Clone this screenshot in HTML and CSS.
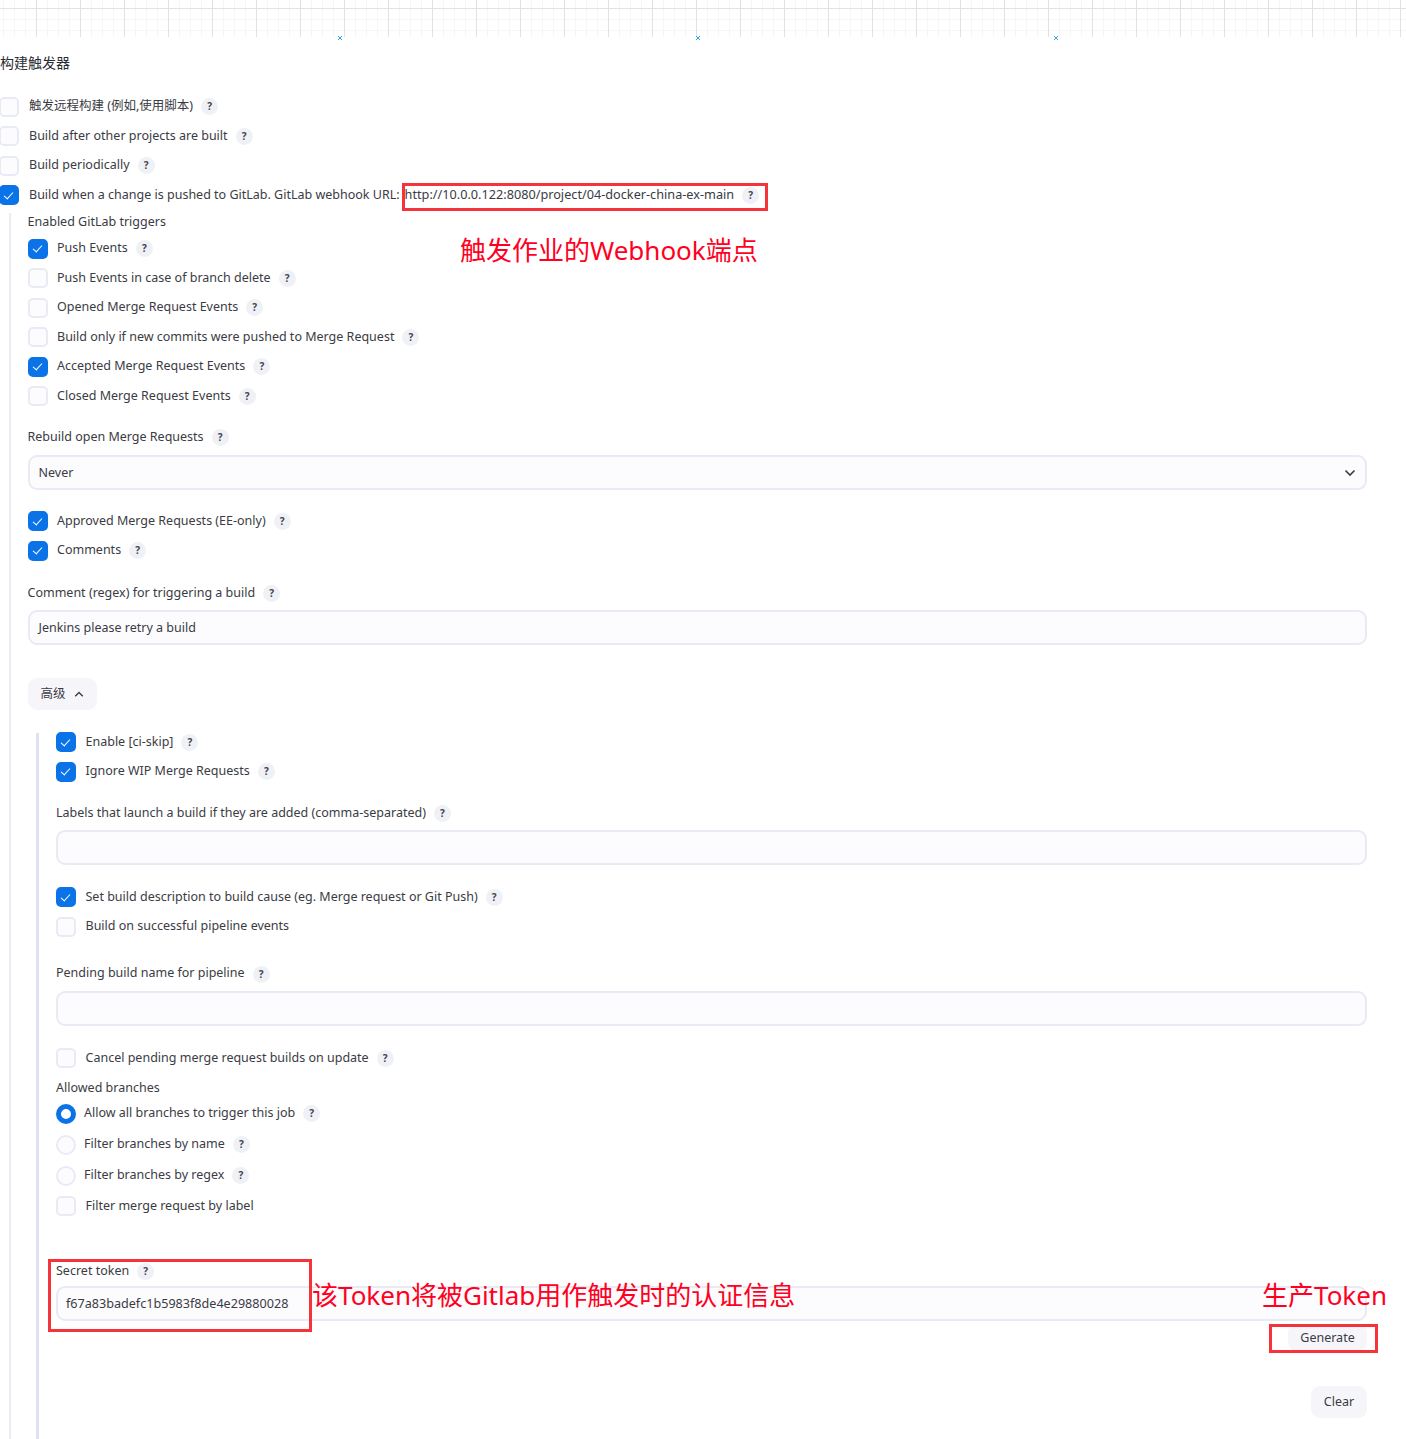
FILE: index.html
```html
<!DOCTYPE html>
<html lang="zh-CN">

<head>
    <meta charset="UTF-8">
    <title>构建触发器</title>
    <link rel="stylesheet" href="styles.css">
</head>

<body>
    <div class="grid-strip">
        <svg class="marker marker-1" viewBox="0 0 6 6"><path d="M1 1l4 4M5 1L1 5" /></svg>
        <svg class="marker marker-2" viewBox="0 0 6 6"><path d="M1 1l4 4M5 1L1 5" /></svg>
        <svg class="marker marker-3" viewBox="0 0 6 6"><path d="M1 1l4 4M5 1L1 5" /></svg>
    </div>

    <h3 class="section-title">构建触发器</h3>

    <div class="checks first-checks">
        <div class="check-row"><span class="box"></span><span class="label">触发远程构建 (例如,使用脚本)</span><span class="help">?</span></div>
        <div class="check-row"><span class="box"></span><span class="label">Build after other projects are built</span><span class="help">?</span></div>
        <div class="check-row"><span class="box"></span><span class="label">Build periodically</span><span class="help">?</span></div>
        <div class="check-row"><span class="box checked"></span><span class="label">Build when a change is pushed to GitLab. GitLab webhook URL:<span class="url">http://10.0.0.122:8080/project/04-docker-china-ex-main</span></span><span class="help">?</span></div>
    </div>

    <div class="nested nested-outer">
        <div class="field-label triggers-label">Enabled GitLab triggers</div>
        <div class="checks">
            <div class="check-row"><span class="box checked"></span><span class="label">Push Events</span><span class="help">?</span></div>
            <div class="check-row"><span class="box"></span><span class="label">Push Events in case of branch delete</span><span class="help">?</span></div>
            <div class="check-row"><span class="box"></span><span class="label">Opened Merge Request Events</span><span class="help">?</span></div>
            <div class="check-row"><span class="box"></span><span class="label">Build only if new commits were pushed to Merge Request</span><span class="help">?</span></div>
            <div class="check-row"><span class="box checked"></span><span class="label">Accepted Merge Request Events</span><span class="help">?</span></div>
            <div class="check-row"><span class="box"></span><span class="label">Closed Merge Request Events</span><span class="help">?</span></div>
        </div>

        <div class="field-label rebuild-label">Rebuild open Merge Requests<span class="help">?</span></div>
        <div class="input select">Never
            <svg class="chevron" viewBox="0 0 12 8"><path d="M1.5 1.5L6 6l4.5-4.5" /></svg>
        </div>

        <div class="checks approved-checks">
            <div class="check-row"><span class="box checked"></span><span class="label">Approved Merge Requests (EE-only)</span><span class="help">?</span></div>
            <div class="check-row"><span class="box checked"></span><span class="label">Comments</span><span class="help">?</span></div>
        </div>

        <div class="field-label comment-label">Comment (regex) for triggering a build<span class="help">?</span></div>
        <div class="input">Jenkins please retry a build</div>

        <button class="btn btn-advanced">高级
            <svg class="chevron-up" viewBox="0 0 12 8"><path d="M1.5 6L6 1.5 10.5 6" /></svg>
        </button>

        <div class="nested nested-inner">
            <div class="checks advanced-checks">
                <div class="check-row"><span class="box checked"></span><span class="label">Enable [ci-skip]</span><span class="help">?</span></div>
                <div class="check-row"><span class="box checked"></span><span class="label">Ignore WIP Merge Requests</span><span class="help">?</span></div>
            </div>

            <div class="field-label labels-label">Labels that launch a build if they are added (comma-separated)<span class="help">?</span></div>
            <div class="input"></div>

            <div class="checks description-checks">
                <div class="check-row"><span class="box checked"></span><span class="label">Set build description to build cause (eg. Merge request or Git Push)</span><span class="help">?</span></div>
                <div class="check-row"><span class="box"></span><span class="label">Build on successful pipeline events</span></div>
            </div>

            <div class="field-label pending-label">Pending build name for pipeline<span class="help">?</span></div>
            <div class="input"></div>

            <div class="checks cancel-checks">
                <div class="check-row"><span class="box"></span><span class="label">Cancel pending merge request builds on update</span><span class="help">?</span></div>
            </div>

            <div class="field-label branches-label">Allowed branches</div>
            <div class="radio-row"><span class="radio selected"></span><span class="label">Allow all branches to trigger this job</span><span class="help">?</span></div>
            <div class="radio-row"><span class="radio"></span><span class="label">Filter branches by name</span><span class="help">?</span></div>
            <div class="radio-row"><span class="radio"></span><span class="label">Filter branches by regex</span><span class="help">?</span></div>
            <div class="check-row filter-label-row"><span class="box"></span><span class="label">Filter merge request by label</span></div>

            <div class="field-label token-label">Secret token<span class="help">?</span></div>
            <div class="input token-input">f67a83badefc1b5983f8de4e29880028</div>

            <div class="actions">
                <button class="btn btn-generate">Generate</button>
                <button class="btn btn-clear">Clear</button>
            </div>
        </div>
    </div>

    <!-- red annotations drawn on top of the screenshot -->
    <div class="note-box box-url"></div>
    <div class="note-box box-token"></div>
    <div class="note-box box-generate"></div>
    <div class="note note-webhook">触发作业的Webhook端点</div>
    <div class="note note-token">该Token将被Gitlab用作触发时的认证信息</div>
    <div class="note note-generate">生产Token</div>
</body>

</html>
```

FILE: styles.css
```css
:root {
    --text-color: #3b3b44;
    --border-color: #e8ebf5;
    --field-bg: #fcfcfe;
    --blue: #0b73e8;
    --note-red: #ff0022;
}

* {
    margin: 0;
    padding: 0;
    box-sizing: border-box;
}

body {
    position: relative;
    height: 1439px;
    overflow: hidden;
    background-color: white;
    color: var(--text-color);
    font-family: 'Noto Sans', 'Noto Sans CJK SC', sans-serif;
    font-size: 12.5px;
    line-height: 18px;
}

.grid-strip {
    position: relative;
    height: 37px;
    background-image:
        linear-gradient(90deg, #e2e2e2 1px, transparent 1px),
        linear-gradient(#e2e2e2 1px, transparent 1px),
        linear-gradient(90deg, #f6f6f6 1px, transparent 1px),
        linear-gradient(#f6f6f6 1px, transparent 1px);
    background-size: 44px 44px, 44px 44px, 11px 11px, 11px 11px;
    background-position: 36px 0, 0 8px, 3px 0, 0 8px;
}

.marker {
    position: absolute;
    top: 35px;
    width: 6px;
    height: 6px;
    fill: none;
    stroke: #2aa5e6;
    stroke-width: 1;
}

.marker-1 {
    left: 337px;
}

.marker-2 {
    left: 695px;
}

.marker-3 {
    left: 1053px;
}

.section-title {
    margin-top: 17px;
    font-size: 14px;
    font-weight: 400;
    line-height: 18px;
    color: #2b2b33;
}

.checks {
    display: flex;
    flex-direction: column;
}

.first-checks {
    margin-top: 20px;
}

.first-checks .box {
    margin-left: -1px;
    margin-right: 10px;
}

.check-row,
.radio-row {
    display: flex;
    align-items: center;
    height: 29.5px;
}

.radio-row {
    height: 31px;
}

.label {
    padding-bottom: 1px;
}

.url {
    margin-left: 5px;
    font-size: 12.7px;
}

.box,
.radio {
    flex-shrink: 0;
    position: relative;
    width: 20px;
    height: 20px;
    margin-right: 9.5px;
    border: 2px solid var(--border-color);
    border-radius: 5px;
    background-color: var(--field-bg);
}

.radio {
    border-radius: 50%;
    margin-right: 8px;
}

.box.checked {
    border-color: var(--blue);
    background-color: var(--blue);
}

.box.checked::after {
    content: "";
    position: absolute;
    left: 5px;
    top: 2.5px;
    width: 4px;
    height: 8px;
    border: solid white;
    border-width: 0 1.5px 1.5px 0;
    transform: rotate(42deg);
}

.radio.selected {
    border: 5px solid var(--blue);
    background-color: white;
}

.help {
    flex-shrink: 0;
    display: inline-block;
    width: 17px;
    height: 17px;
    margin-left: 8px;
    border-radius: 50%;
    background-color: #eff1f6;
    color: #44444c;
    font-size: 10px;
    font-weight: 700;
    line-height: 17px;
    text-align: center;
    vertical-align: middle;
}

.field-label {
    line-height: 18px;
}

.nested-outer {
    margin-top: 3px;
    margin-left: 9px;
    padding-left: 16.5px;
    padding-right: 39px;
    border-left: 2px solid #e9ecf4;
}

.nested-inner {
    display: flow-root;
    margin-left: 8.5px;
    margin-top: 23px;
    padding-left: 17px;
    height: 720px;
    border-left: 3px solid #dfe3f0;
}

.triggers-label {
    margin-bottom: 3px;
}

.rebuild-label {
    margin-top: 17px;
}

.input {
    position: relative;
    height: 35px;
    margin-top: 8px;
    padding: 0 9px;
    border: 2px solid var(--border-color);
    border-radius: 9px;
    background-color: var(--field-bg);
    line-height: 31px;
}

.select {
    margin-top: 9px;
}

.token-input {
    margin-top: 6px;
    padding: 0 8px;
    font-size: 12.6px;
}

.chevron,
.chevron-up {
    fill: none;
    stroke: #3b3b44;
    stroke-width: 1.6;
}

.chevron {
    position: absolute;
    right: 9px;
    top: 12px;
    width: 12px;
    height: 8px;
}

.chevron-up {
    width: 10px;
    height: 7px;
    margin-left: 8px;
}

.approved-checks {
    margin-top: 16.5px;
}

.comment-label {
    margin-top: 18.5px;
}

.btn {
    border: none;
    border-radius: 9px;
    background-color: #f6f6fa;
    color: var(--text-color);
    font-family: inherit;
    font-size: 12.5px;
    line-height: 18px;
}

.btn-advanced {
    display: flex;
    align-items: center;
    height: 32px;
    margin-top: 33px;
    padding: 0 13px;
}

.advanced-checks {
    margin-top: -6px;
}

.labels-label {
    margin-top: 18px;
}

.description-checks {
    margin-top: 17px;
}

.pending-label {
    margin-top: 23px;
}

.cancel-checks {
    margin-top: 18px;
}

.branches-label {
    margin-top: 5.5px;
    margin-bottom: 1.5px;
}

.filter-label-row {
    height: 30px;
}

.token-label {
    margin-top: 40.5px;
}

.actions {
    display: flex;
    flex-direction: column;
    align-items: flex-end;
}

.btn-generate {
    width: 79px;
    height: 27px;
    margin-top: 3px;
    padding-top: 2px;
}

.btn-clear {
    width: 56px;
    height: 32px;
    margin-top: 35px;
}

.note-box {
    position: absolute;
    border: 3px solid #f4333a;
}

.box-url {
    left: 402px;
    top: 183px;
    width: 366px;
    height: 28px;
}

.box-token {
    left: 48px;
    top: 1259px;
    width: 264px;
    height: 73px;
}

.box-generate {
    left: 1269px;
    top: 1324px;
    width: 109px;
    height: 29px;
}

.note {
    position: absolute;
    color: var(--note-red);
    font-size: 26px;
    line-height: 34px;
    white-space: nowrap;
}

.note-webhook {
    left: 460px;
    top: 233px;
}

.note-token {
    left: 312px;
    top: 1278px;
}

.note-generate {
    left: 1262px;
    top: 1278px;
}
```
